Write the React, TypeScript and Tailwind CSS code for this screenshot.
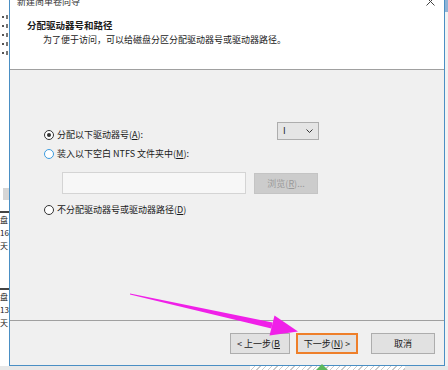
import React from 'react';

const font = "font-['Noto_Sans_CJK_SC','Microsoft_YaHei',sans-serif]";

const Radio: React.FC<{ checked?: boolean; hover?: boolean }> = ({ checked, hover }) => (
  <span
    className={`w-[10px] h-[10px] rounded-full border bg-white flex items-center justify-center shrink-0 ${
      hover ? 'border-[#3c9ce0]' : 'border-[#333333]'
    }`}
  >
    {checked && <span className="w-[4px] h-[4px] rounded-full bg-[#333333]" />}
  </span>
);

const LeftStrip: React.FC = () => (
  <div className="w-[9px] shrink-0 bg-white flex flex-col overflow-hidden">
    {/* bits of the window behind the wizard */}
    <div className="h-[12px]" />
    {[0, 1, 2, 3, 4].map((i) => (
      <div key={i} className="h-[9px] flex items-center gap-[2px] pl-[2px]">
        <span className="w-[2px] h-[2px] bg-[#555]" />
        <span className="w-[2px] h-[4px] bg-[#777]" />
      </div>
    ))}
    <div className="h-[131px]" />
    <div className="h-[12px] ml-[3px] bg-[#d6d6d6]" />
    <div className="h-[11px]" />
    <div className="h-[2px] bg-[#444]" />
    <div className={`${font} text-[8px] leading-[13px] text-[#222]`}>
      <div>盘</div>
      <div>16</div>
      <div>天</div>
    </div>
    <div className="h-[36px]" />
    <div className="h-[2px] bg-[#444]" />
    <div className={`${font} text-[8px] leading-[13px] text-[#222]`}>
      <div>盘</div>
      <div>13</div>
      <div>天</div>
    </div>
  </div>
);

export default function App() {
  return (
    <div className={`relative w-[448px] h-[370px] overflow-hidden bg-white ${font} text-[9px] text-[#1a1a1a]`}>
      <div className="flex h-[366px]">
        <LeftStrip />

        {/* wizard window */}
        <div className="w-[436px] shrink-0 flex flex-col border-x border-b border-[#4a8fc4] bg-[#f0f0f0]">
          {/* header */}
          <div className="h-[70px] bg-white border-b border-[#a0a0a0] flex flex-col">
            <div className="h-[8px] overflow-hidden flex justify-between pl-[7px] pr-[9px]">
              <span className="-mt-[4px] leading-[12px] text-[9px] text-[#333]">新建简单卷向导</span>
              <svg className="-mt-[3px]" width="9" height="9" viewBox="0 0 9 9" fill="none">
                <path d="M0.5 0.5 L8.5 8.5 M8.5 0.5 L0.5 8.5" stroke="#444" strokeWidth="1" />
              </svg>
            </div>
            <div className="mt-[11px] pl-[17px] leading-[12px] font-bold text-[9.5px]">分配驱动器号和路径</div>
            <div className="mt-[3px] pl-[33px] leading-[12px]">为了便于访问，可以给磁盘分区分配驱动器号或驱动器路径。</div>
          </div>

          {/* body */}
          <div className="h-[251px] border-b border-[#a0a0a0] pl-[34px] pt-[52px] flex flex-col">
            <div className="flex items-start">
              <div className="w-[233px] h-[18px] mt-[4px] flex items-center gap-[3px]">
                <Radio checked />
                <span className="leading-[12px]">
                  分配以下驱动器号(<u>A</u>):
                </span>
              </div>
              <div className="w-[42px] h-[18px] border border-[#adadad] bg-[#e5e5e5] flex items-center justify-between pl-[5px] pr-[5px]">
                <span className="leading-[12px]">I</span>
                <svg width="7" height="4" viewBox="0 0 7 4" fill="none">
                  <path d="M0.5 0.5 L3.5 3.5 L6.5 0.5" stroke="#333" strokeWidth="1" />
                </svg>
              </div>
            </div>

            <div className="h-[18px] mt-[1px] flex items-center gap-[3px]">
              <Radio hover />
              <span className="leading-[12px]">
                装入以下空白 NTFS 文件夹中(<u>M</u>):
              </span>
            </div>

            <div className="mt-[9px] ml-[18px] flex items-start gap-[8px]">
              <div className="w-[184px] h-[22px] bg-[#f7f7f7] border border-[#d4d4d4]" />
              <div className="w-[64px] h-[21px] mt-[1px] bg-[#cccccc] border border-[#c4c4c4] flex items-center justify-center text-[#9a9a9a] leading-[12px]">
                浏览(<u>R</u>)...
              </div>
            </div>

            <div className="h-[18px] mt-[7px] flex items-center gap-[3px]">
              <Radio />
              <span className="leading-[12px]">
                不分配驱动器号或驱动器路径(<u>D</u>)
              </span>
            </div>
          </div>

          {/* footer */}
          <div className="flex-1 flex justify-end items-start pt-[12px] pr-[9px]">
            <div className="w-[60px] h-[21px] bg-[#e1e1e1] border border-[#adadad] flex items-center pl-[6px] overflow-hidden whitespace-nowrap leading-[12px]">
              &lt; 上一步(<u>B</u>
            </div>
            <div className="w-[62px] h-[21px] ml-[6px] bg-[#e1e1e1] border-2 border-[#ee7f2a] flex items-center justify-center leading-[12px]">
              下一步(<u>N</u>) &gt;
            </div>
            <div className="w-[64px] h-[21px] ml-[13px] bg-[#e1e1e1] border border-[#adadad] flex items-center justify-center leading-[12px]">
              取消
            </div>
          </div>
        </div>

        <div className="w-[3px] shrink-0 flex flex-col bg-[#f2f2f2]">
          <div className="h-[12px] bg-[#8fb3d6]" />
        </div>
      </div>

      {/* strip of the desktop below the window */}
      <div className="flex h-[4px]">
        <div className="w-[250px] bg-[#e8e8e8]" />
        <div className="w-[155px] bg-[repeating-linear-gradient(135deg,#ffffff_0px,#ffffff_3px,#c8c8c8_3px,#c8c8c8_4px)]" />
        <div className="flex-1 bg-[#e8e8e8]" />
      </div>

      {/* annotations drawn over the screenshot */}
      <svg className="absolute inset-0 pointer-events-none" width="448" height="370" viewBox="0 0 448 370">
        <polygon points="130,293.6 272.6,322.4 271.4,328.6 130,294.4" fill="#f020e8" />
        <polygon points="274.5,315.5 298,331.5 269.5,335.5" fill="#f020e8" />
        <polygon points="322,364 316,370 328,370" fill="#5cb85c" />
      </svg>
    </div>
  );
}
